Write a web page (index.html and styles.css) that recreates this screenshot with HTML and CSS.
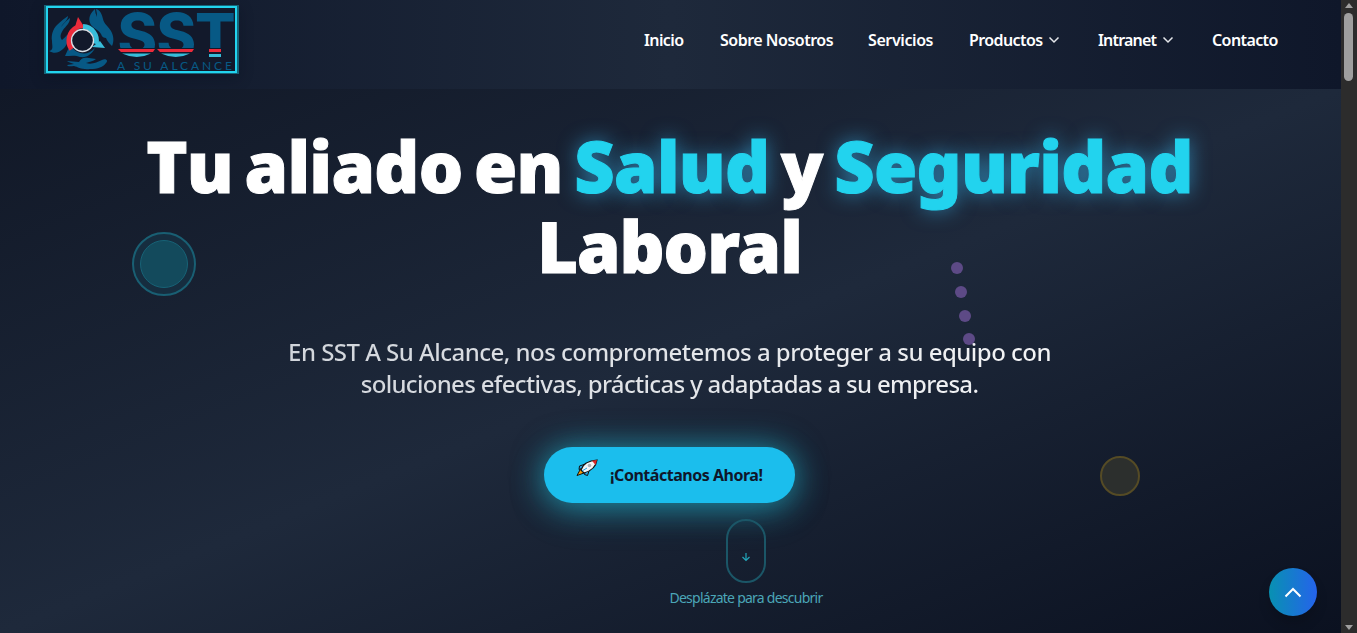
FILE: index.html
```html
<!DOCTYPE html>
<html lang="es">
<head>
<meta charset="utf-8">
<title>SST A Su Alcance</title>
<link rel="stylesheet" href="styles.css">
</head>
<body>
<div class="page">
  <header class="header">
    <a class="logo">
      <svg width="191" height="67" viewBox="48 8 187 63">
        <g fill="#075985">
          <path d="M95 9C89 14 88 20 91 25C94 29 99 30 101 34C102 37 104 38 106 38C107 41 109 43 112 46C114 42 114 36 111 31C108 26 104 24 103 19C102 14 100 10 96 9Q97 13 97 17Q95 13 95 9Z"/>
          <path d="M49 51C54 50 52 46 52 41C51 35 53 29 57 25C61 21 65 18 68 16C68 20 64 22 61 27C64 23 67 20 70 18C70 23 66 26 63 30C60 35 60 37 62 40C65 38 66 35 69 34C68 40 67 46 63 49C59 53 54 54 49 51Z"/>
          <path d="M67 61C71 61 75 62 79 62C81 58 84 57 89 58L96 59C92 62 88 62 86 63C92 65 97 62 102 60C105 58 109 60 106 63C103 67 98 69 90 69C82 70 78 67 74 66C71 66 68 67 67 65L74 64C71 63 68 62 67 61Z"/>
          <path d="M65 56C67 52 68 48 71 46C76 54 87 57 95 48C92 54 87 58 80 57C76 55 70 56 65 56Z"/>
        </g>
        <path d="M72 49A14.500 14.500 0 0 1 77 28" fill="none" stroke="#ec2b3b" stroke-width="6"/>
        <path d="M78 17l5 8v3l-9 2z" fill="#ec2b3b"/>
        <path d="M83 26.500A14 14 0 0 1 96 44" fill="none" stroke="#38bdda" stroke-width="5"/>
        <path d="M100 41l5 7-13-1z" fill="#38bdda"/>
        <circle cx="82.500" cy="40.500" r="11" fill="#12192b" stroke="#d9dee5" stroke-width="1.300"/>
        <text x="117.500 156.500 195" y="57" class="logo-main">SST</text>
        <path d="M116 48h119v11H116z" fill="#12192b"/>
        <path d="M118 49h37l-2 3h-32zM157 49h37l-2 3h-32zM209 49h12v3h-12z" fill="#ec2b3b"/>
        <path d="M122 53.500h29q-14 7-29 0zM161 53.500h29q-14 7-29 0zM209 54h12v3h-12z" fill="#38bdda"/>
        <text x="117" y="69.500" textLength="115" class="logo-sub">A SU ALCANCE</text>
      </svg>
    </a>
    <nav class="nav">
      <a class="n1">Inicio</a>
      <a class="n2">Sobre Nosotros</a>
      <a class="n3">Servicios</a>
      <a class="n4">Productos<svg class="chev" width="12" height="8" viewBox="0 0 12 8"><path d="M1.500 1.500 6 6l4.500-4.500"/></svg></a>
      <a class="n5">Intranet<svg class="chev" width="12" height="8" viewBox="0 0 12 8"><path d="M1.500 1.500 6 6l4.500-4.500"/></svg></a>
      <a class="n6">Contacto</a>
    </nav>
  </header>
  <main class="hero">
    <span class="ring"><span class="ring-core"></span></span>
    <span class="dot d1"></span><span class="dot d2"></span><span class="dot d3"></span><span class="dot d4"></span>
    <span class="amber"></span>
    <h1 class="title"><span class="line1"><span class="first">Tu</span> aliado en <span class="hl">Salud</span> y <span class="hl">Seguridad</span></span><br><span class="line2">Laboral</span></h1>
    <p class="lead"><span class="p1">En SST A Su Alcance, nos comprometemos a proteger a su equipo con</span><br><span class="p2">soluciones efectivas, prácticas y adaptadas a su empresa.</span></p>
    <a class="cta">
      <svg class="rocket" width="22" height="18" viewBox="0 0 22 18">
        <path d="M5 9 1 16.500 8 14z" fill="#f59e0b" stroke="#111" />
        <path d="M8 5.500 3.500 7 3 10.500 7 9zM13 12l-1.500 4.500-3-1 1-4z" fill="#22a7e8" stroke="#111"/>
        <path d="M5 11C7 5 13 1.500 21 1c-1 7-6 11-13 13z" fill="#f3f4f6" stroke="#111" stroke-width="1.200"/>
        <path d="M16 1.800 21 1l-1.500 5z" fill="#dc2626"/>
        <circle cx="13.500" cy="6.500" r="1.800" fill="#aeb4bd"/><path d="M6 12l5-3" stroke="#22a7e8"/>
      </svg>
      <span class="cta-text">¡Contáctanos Ahora!</span>
    </a>
    <div class="scroll">
      <span class="pill"><svg width="10" height="10" viewBox="0 0 10 10"><path d="M5 1v7.500M1.500 5 5 8.500 8.500 5"/></svg></span>
      <span class="hint">Desplázate para descubrir</span>
    </div>
  </main>
  <a class="top"><svg width="18" height="11" viewBox="0 0 18 11"><path d="m1.500 9.500 7.500-7.500 7.500 7.500"/></svg></a>
</div>
<div class="scrollbar"><span class="up"></span><span class="thumb"></span><span class="down"></span></div>
</body>
</html>
```
FILE: styles.css
```css
* { box-sizing: border-box; }
body { margin: 0; width: 1357px; height: 633px; overflow: hidden; display: flex; background: #111827; font-family: "Noto Sans", "Open Sans", sans-serif; }
.page { position: relative; width: 1341px; height: 633px; overflow: hidden; }
.header { height: 89px; padding: 5px 0 0 44px; display: flex; align-items: flex-start; background: linear-gradient(to right, #0f172a, #1e293b 50%, #0f172a); }
.logo { width: 195px; height: 69px; border: 1px solid #156478; border-width: 1px 2px; background: #12192b; box-shadow: 0 4px 12px rgba(8,14,30,.35); display: flex; }
.logo svg { display: block; border: 2px solid #22d3ee; overflow: visible; }
.logo-main { font: 800 60px Inter, sans-serif; fill: #075985; }
.logo-sub { font: 12px Lato, sans-serif; fill: #075985; }
.nav { margin-left: 405px; padding-top: 23px; display: flex; color: #fff; font-size: 16px; line-height: 24px; font-weight: 600; white-space: nowrap; letter-spacing: -.5px; }
.n1 { width: 76px; letter-spacing: -.6px; } .n2 { width: 148px; } .n3 { width: 101px; letter-spacing: -.4px; } .n4 { width: 129px; letter-spacing: -.6px; } .n5 { width: 114px; letter-spacing: -.8px; } .n6 { letter-spacing: -.6px; }
.chev { margin-left: 6px; vertical-align: 2px; }
.chev path { fill: none; stroke: #e5e7eb; stroke-width: 1.500; }
.hero { position: relative; height: 544px; padding-right: 2px; display: flex; flex-direction: column; align-items: center; background: linear-gradient(to bottom right, #111827, #1e293b 50%, #0b1120); }
.title { margin: 37px 0 0; font-size: 70px; line-height: 80px; font-weight: 900; color: #fff; text-align: center; white-space: nowrap; letter-spacing: -.700px; word-spacing: -6px; -webkit-text-stroke: 1px currentColor; }
.first { font-kerning: none; }
.line2 { letter-spacing: -1px; }
.hl { color: #22d3ee; text-shadow: 0 0 20px rgba(56,189,248,.6); }
.lead { position: relative; margin: 50px 0 0; font-size: 24px; line-height: 32px; font-weight: 500; text-align: center; white-space: nowrap; background: linear-gradient(to right, #d1d5db, #f3f4f6); -webkit-background-clip: text; background-clip: text; color: transparent; }
.p1 { letter-spacing: -.52px; }
.p2 { letter-spacing: -.68px; }
.cta { margin-top: 47px; width: 251px; height: 56px; border-radius: 28px; background: #1bbeed; color: #0f172a; display: flex; align-items: center; padding-left: 32px; box-shadow: 0 0 32px rgba(34,211,238,.5), 0 10px 36px rgba(34,211,238,.25); font-size: 16px; font-weight: 700; white-space: nowrap; letter-spacing: -.48px; }
.rocket { margin: -15px 12px 0 0; }
.scroll { margin: 16px 0 0 153px; display: flex; flex-direction: column; align-items: center; }
.pill { width: 40px; height: 64px; border: 2px solid #1b5667; border-radius: 20px; display: flex; justify-content: center; padding-top: 31px; }
.pill path { fill: none; stroke: #22a5b9; stroke-width: 1.200; }
.hint { margin-top: 5px; font-size: 14px; line-height: 20px; color: #4ba6b7; white-space: nowrap; letter-spacing: -.75px; }
.ring, .dot, .amber { position: absolute; border-radius: 50%; }
.ring { left: 132px; top: 143px; width: 64px; height: 64px; border: 2px solid #195f73; background: #162d3f; padding: 6px; }
.ring-core { display: block; width: 48px; height: 48px; border-radius: 50%; background: #134a5c; border: 1px solid #176276; }
.dot { width: 12px; height: 12px; background: #5d4a86; }
.d1 { left: 951px; top: 173px; } .d2 { left: 955px; top: 197px; } .d3 { left: 959px; top: 221px; } .d4 { left: 963px; top: 244px; }
.amber { left: 1100px; top: 367px; width: 40px; height: 40px; background: #2c2f2d; border: 2px solid #554b25; }
.top { position: absolute; left: 1269px; top: 568px; width: 48px; height: 48px; border-radius: 50%; background: linear-gradient(to right, #0891b2, #2563eb); box-shadow: 0 8px 12px rgba(0,0,0,.15); display: flex; align-items: center; justify-content: center; }
.top path { fill: none; stroke: #fff; stroke-width: 2; }
.scrollbar { width: 16px; height: 633px; background: #2c2c2c; display: flex; flex-direction: column; align-items: center; }
.thumb { width: 9px; height: 68px; margin: 5px 1px 0 0; border-radius: 5px; background: #9f9f9f; }
.up, .down { border: 4px solid transparent; width: 8px; height: 5px; }
.up { margin-top: 3px; border-top: 0; border-bottom: 5px solid #9f9f9f; }
.down { margin-top: auto; margin-bottom: 3px; border-bottom: 0; border-top: 5px solid #9f9f9f; }
```
